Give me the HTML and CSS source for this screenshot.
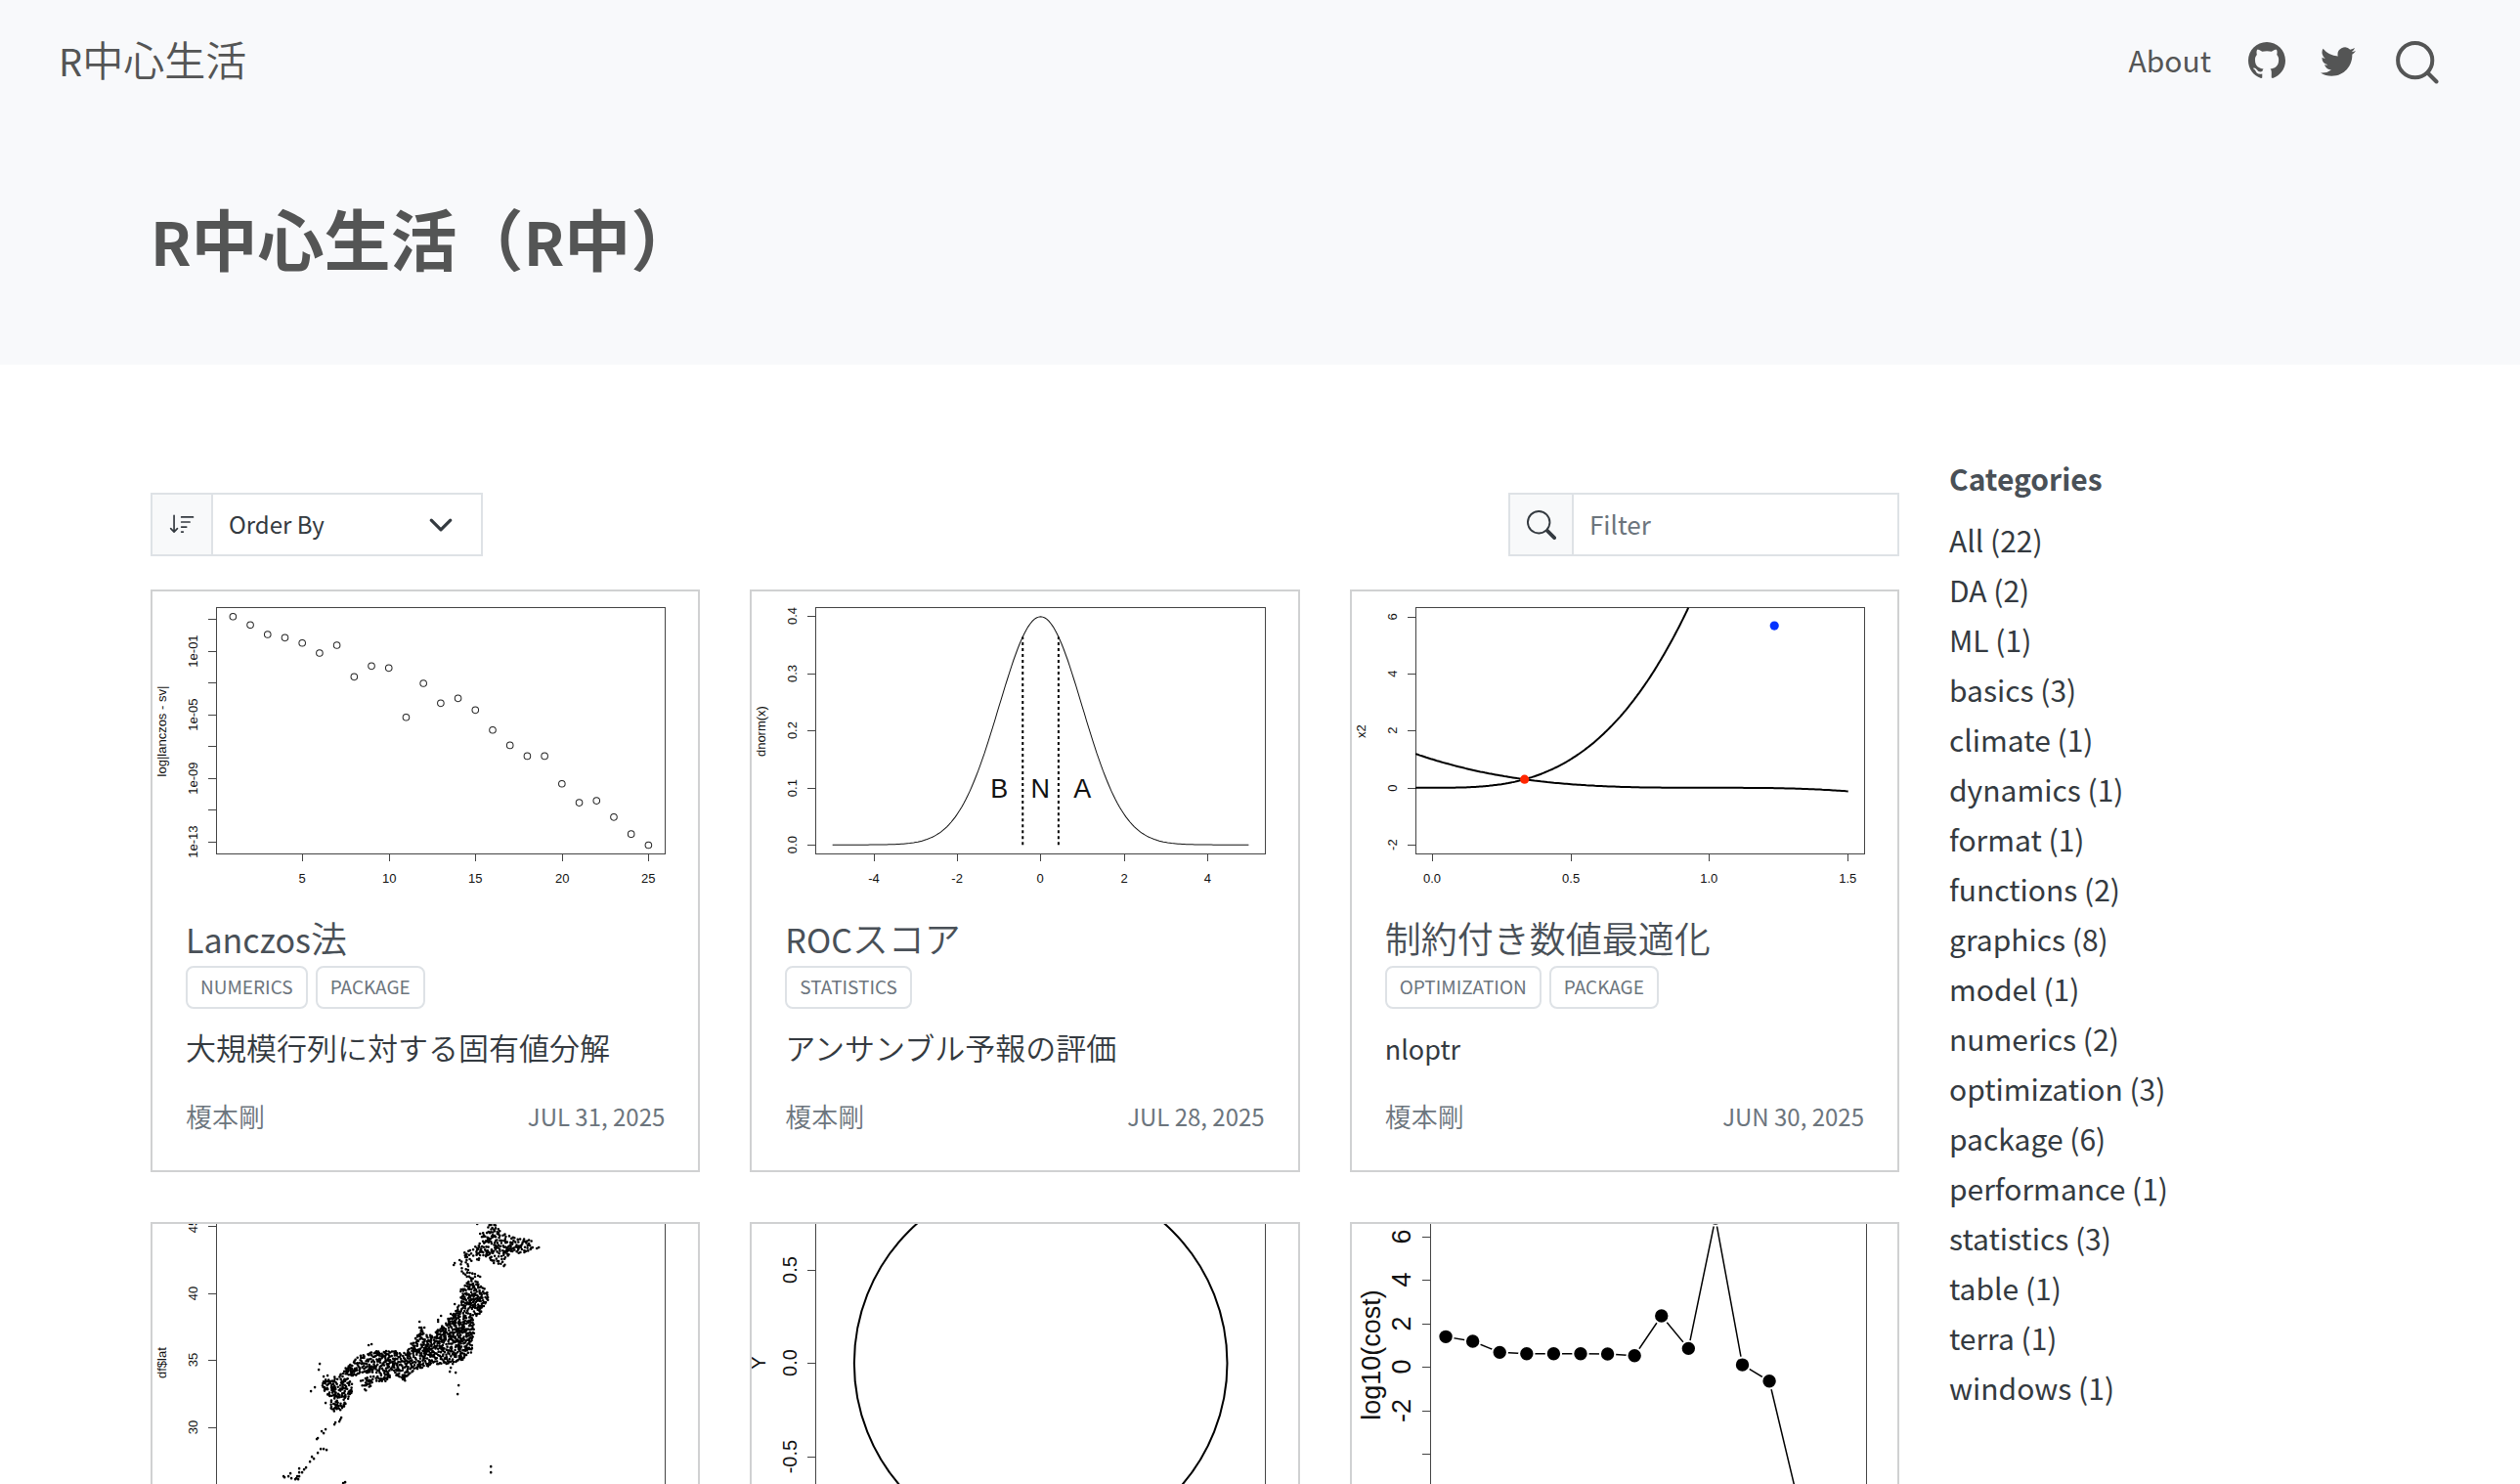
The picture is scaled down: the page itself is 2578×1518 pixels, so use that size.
FILE: index.html
```html
<!DOCTYPE html>
<html lang="ja">
<head>
<meta charset="utf-8">
<meta name="viewport" content="width=device-width, initial-scale=1">
<title>R中心生活</title>
<link rel="stylesheet" href="styles.css">
</head>
<body>
<header class="banner">
  <nav class="navbar">
    <a class="brand" href="#"><span class="latin">R</span>中心生活</a>
    <div class="nav-links">
      <a class="nav-about" href="#">About</a>
      <a class="nav-icon" href="#" aria-label="GitHub"><svg class="icon-github" viewBox="0 0 16 16" fill="currentColor"><path d="M8 0C3.58 0 0 3.58 0 8c0 3.54 2.29 6.53 5.47 7.59.4.07.55-.17.55-.38 0-.19-.01-.82-.01-1.49-2.01.37-2.53-.49-2.69-.94-.09-.23-.48-.94-.82-1.13-.28-.15-.68-.52-.01-.53.63-.01 1.08.58 1.23.82.72 1.21 1.87.87 2.33.66.07-.52.28-.87.51-1.07-1.78-.2-3.64-.89-3.64-3.95 0-.87.31-1.59.82-2.15-.08-.2-.36-1.02.08-2.12 0 0 .67-.21 2.2.82.64-.18 1.32-.27 2-.27.68 0 1.36.09 2 .27 1.53-1.04 2.2-.82 2.2-.82.44 1.1.16 1.92.08 2.12.51.56.82 1.27.82 2.15 0 3.07-1.87 3.75-3.65 3.95.29.25.54.73.54 1.48 0 1.07-.01 1.93-.01 2.2 0 .21.15.46.55.38A8.012 8.012 0 0 0 16 8c0-4.42-3.58-8-8-8z"/></svg></a>
      <a class="nav-icon" href="#" aria-label="Twitter"><svg class="icon-twitter" viewBox="0 0 16 16" fill="currentColor"><path d="M5.026 15c6.038 0 9.341-5.003 9.341-9.334 0-.14 0-.282-.006-.422A6.685 6.685 0 0 0 16 3.542a6.658 6.658 0 0 1-1.889.518 3.301 3.301 0 0 0 1.447-1.817 6.533 6.533 0 0 1-2.087.793A3.286 3.286 0 0 0 7.875 6.03a9.325 9.325 0 0 1-6.767-3.429 3.289 3.289 0 0 0 1.018 4.382A3.323 3.323 0 0 1 .64 6.575v.045a3.288 3.288 0 0 0 2.632 3.218 3.203 3.203 0 0 1-.865.115 3.23 3.23 0 0 1-.614-.057 3.283 3.283 0 0 0 3.067 2.277A6.588 6.588 0 0 1 .78 13.58a6.32 6.32 0 0 1-.78-.045A9.344 9.344 0 0 0 5.026 15z"/></svg></a>
      <button class="search-button" type="button" aria-label="Search"><svg viewBox="0 0 44 44" fill="none" stroke="currentColor" stroke-width="4"><circle cx="19.700" cy="19.700" r="17.600"/><path d="M32.500 32.500l9 9" stroke-linecap="round"/></svg></button>
    </div>
  </nav>
  <h1 class="page-title"><span class="latin">R</span>中心生活（<span class="latin">R</span>中）</h1>
</header>

<div class="page">
  <main class="listing">
    <div class="toolbar">
      <div class="input-group sort-group">
        <label class="addon" for="order" aria-label="Order By"><svg class="icon-sort" viewBox="0 0 16 16" fill="currentColor"><path d="M3.5 2.500a.5.5 0 0 0-1 0v8.793l-1.146-1.147a.5.5 0 0 0-.708.708l2 1.999.007.007a.497.497 0 0 0 .7-.006l2-2a.5.5 0 0 0-.707-.708L3.5 11.293V2.500zm3.500 1a.5.5 0 0 1 .5-.5h7a.5.5 0 0 1 0 1h-7a.5.5 0 0 1-.5-.5zM7.500 6a.5.5 0 0 0 0 1h5a.5.5 0 0 0 0-1h-5zm0 3a.5.5 0 0 0 0 1h3a.5.5 0 0 0 0-1h-3zm0 3a.5.5 0 0 0 0 1h1a.5.5 0 0 0 0-1h-1z"/></svg></label>
        <select id="order" class="order-select"><option>Order By</option><option>Title</option><option>Date</option></select>
      </div>
      <div class="input-group filter-group">
        <label class="addon" for="filter" aria-label="Filter"><svg class="icon-filter" viewBox="0 0 16 16" fill="currentColor"><path d="M11.742 10.344a6.500 6.500 0 1 0-1.397 1.398h-.001c.03.04.062.078.098.115l3.850 3.850a1 1 0 0 0 1.415-1.414l-3.850-3.850a1.007 1.007 0 0 0-.115-.1zM12 6.500a5.500 5.500 0 1 1-11 0 5.500 5.500 0 0 1 11 0z"/></svg></label>
        <input id="filter" class="filter-input" type="text" placeholder="Filter">
      </div>
    </div>

    <div class="cards">
      <article class="card">
        <svg class="plot" viewBox="0 0 558 306" role="img" aria-label="lanczos" data-plot="lanczos">
          <rect class="frame" x="65" y="16" width="459" height="252"/>
          <path class="tick" d="M57 28h8M57 61h8M57 93h8M57 126h8M57 158h8M57 191h8M57 223h8M57 256h8M153 268v8M242 268v8M330 268v8M419 268v8M507 268v8"/>
          <g class="x-labels"><text x="153" y="298">5</text><text x="242" y="298">10</text><text x="330" y="298">15</text><text x="419" y="298">20</text><text x="507" y="298">25</text></g>
          <g class="y-labels"><text transform="translate(46 61) rotate(-90)">1e-01</text><text transform="translate(46 126) rotate(-90)">1e-05</text><text transform="translate(46 191) rotate(-90)">1e-09</text><text transform="translate(46 256) rotate(-90)">1e-13</text><text transform="translate(14 143) rotate(-90)">log|lanczos - sv|</text></g>
        </svg>
        <div class="card-body">
          <h2 class="card-title"><a href="#"><span class="latin">Lanczos</span>法</a></h2>
          <div class="tags"><a class="tag" href="#">NUMERICS</a><a class="tag" href="#">PACKAGE</a></div>
          <p class="summary">大規模行列に対する固有値分解</p>
          <div class="meta"><span class="author">榎本剛</span><time datetime="2025-07-31">JUL 31, 2025</time></div>
        </div>
      </article>

      <article class="card">
        <svg class="plot" viewBox="0 0 558 306" role="img" aria-label="dnorm" data-plot="dnorm">
          <rect class="frame" x="65" y="16" width="460" height="252"/>
          <path class="tick" d="M57 25h8M57 84h8M57 142h8M57 201h8M57 259h8M125 268v8M210 268v8M295 268v8M381 268v8M466 268v8"/>
          <g class="x-labels"><text x="125" y="298">-4</text><text x="210" y="298">-2</text><text x="295" y="298">0</text><text x="381" y="298">2</text><text x="466" y="298">4</text></g>
          <g class="y-labels"><text transform="translate(46 25) rotate(-90)">0.4</text><text transform="translate(46 84) rotate(-90)">0.3</text><text transform="translate(46 142) rotate(-90)">0.2</text><text transform="translate(46 201) rotate(-90)">0.1</text><text transform="translate(46 259) rotate(-90)">0.0</text><text transform="translate(14 143) rotate(-90)">dnorm(x)</text></g>
          <g class="large-labels"><text x="253" y="211">B</text><text x="295" y="211">N</text><text x="338" y="211">A</text></g>
        </svg>
        <div class="card-body">
          <h2 class="card-title"><a href="#"><span class="latin">ROC</span>スコア</a></h2>
          <div class="tags"><a class="tag" href="#">STATISTICS</a></div>
          <p class="summary">アンサンブル予報の評価</p>
          <div class="meta"><span class="author">榎本剛</span><time datetime="2025-07-28">JUL 28, 2025</time></div>
        </div>
      </article>

      <article class="card">
        <svg class="plot" viewBox="0 0 558 306" role="img" aria-label="nloptr" data-plot="nloptr">
          <rect class="frame" x="65" y="16" width="459" height="252"/>
          <path class="tick" d="M57 26h8M57 84h8M57 142h8M57 201h8M57 259h8M82 268v8M224 268v8M365 268v8M507 268v8"/>
          <g class="x-labels"><text x="82" y="298">0.0</text><text x="224" y="298">0.5</text><text x="365" y="298">1.0</text><text x="507" y="298">1.5</text></g>
          <g class="y-labels"><text transform="translate(46 26) rotate(-90)">6</text><text transform="translate(46 84) rotate(-90)">4</text><text transform="translate(46 142) rotate(-90)">2</text><text transform="translate(46 201) rotate(-90)">0</text><text transform="translate(46 259) rotate(-90)">-2</text><text transform="translate(14 143) rotate(-90)">x2</text></g>
        </svg>
        <div class="card-body">
          <h2 class="card-title"><a href="#">制約付き数値最適化</a></h2>
          <div class="tags"><a class="tag" href="#">OPTIMIZATION</a><a class="tag" href="#">PACKAGE</a></div>
          <p class="summary"><span class="latin">nloptr</span></p>
          <div class="meta"><span class="author">榎本剛</span><time datetime="2025-06-30">JUN 30, 2025</time></div>
        </div>
      </article>

      <article class="card">
        <svg class="plot" viewBox="0 0 558 306" role="img" aria-label="stations" data-plot="stations">
          <path class="frame" d="M65 0v306M524 0v306"/>
          <path class="tick" d="M57 2h8M57 71h8M57 139h8M57 208h8M57 276h8"/>
          <g class="y-labels"><text transform="translate(46 2) rotate(-90)">45</text><text transform="translate(46 71) rotate(-90)">40</text><text transform="translate(46 139) rotate(-90)">35</text><text transform="translate(46 208) rotate(-90)">30</text><text transform="translate(14 142) rotate(-90)">df$lat</text></g>
        </svg>
      </article>

      <article class="card">
        <svg class="plot" viewBox="0 0 558 306" role="img" aria-label="circle">
          <path class="frame" d="M65 0v306M525 0v306"/>
          <path class="tick" d="M57 47h8M57 142h8M57 238h8"/>
          <g class="y-labels medium-labels"><text transform="translate(46 47) rotate(-90)">0.5</text><text transform="translate(46 142) rotate(-90)">0.0</text><text transform="translate(46 238) rotate(-90)">-0.5</text><text transform="translate(14 142) rotate(-90)">Y</text></g>
          <circle class="curve" cx="295.500" cy="142.300" r="190.700"/>
        </svg>
      </article>

      <article class="card">
        <svg class="plot" viewBox="0 0 558 306" role="img" aria-label="cost" data-plot="cost">
          <path class="frame" d="M80 0v306M526 0v306"/>
          <path class="tick" d="M72 13h8M72 57h8M72 102h8M72 146h8M72 191h8M72 235h8"/>
          <g class="y-labels large-labels"><text transform="translate(60 13) rotate(-90)">6</text><text transform="translate(60 57) rotate(-90)">4</text><text transform="translate(60 102) rotate(-90)">2</text><text transform="translate(60 146) rotate(-90)">0</text><text transform="translate(60 191) rotate(-90)">-2</text><text transform="translate(29 134) rotate(-90)">log10(cost)</text></g>
        </svg>
      </article>
    </div>
  </main>

  <aside class="categories">
    <h2 class="categories-title">Categories</h2>
    <ul class="category-list">
      <li><a href="#">All (22)</a></li>
      <li><a href="#">DA (2)</a></li>
      <li><a href="#">ML (1)</a></li>
      <li><a href="#">basics (3)</a></li>
      <li><a href="#">climate (1)</a></li>
      <li><a href="#">dynamics (1)</a></li>
      <li><a href="#">format (1)</a></li>
      <li><a href="#">functions (2)</a></li>
      <li><a href="#">graphics (8)</a></li>
      <li><a href="#">model (1)</a></li>
      <li><a href="#">numerics (2)</a></li>
      <li><a href="#">optimization (3)</a></li>
      <li><a href="#">package (6)</a></li>
      <li><a href="#">performance (1)</a></li>
      <li><a href="#">statistics (3)</a></li>
      <li><a href="#">table (1)</a></li>
      <li><a href="#">terra (1)</a></li>
      <li><a href="#">windows (1)</a></li>
    </ul>
  </aside>
</div>
<script src="plots.js"></script>
</body>
</html>
```
FILE: styles.css
```css
* {
  box-sizing: border-box;
}

html {
  overflow: hidden;
}

body {
  margin: 0;
  height: 100vh;
  overflow: hidden;
  background: #fff;
  color: #343a40;
  font-family: "Noto Sans CJK JP", "Noto Sans", sans-serif;
  font-size: 30px;
  line-height: 51px;
}

a {
  color: inherit;
  text-decoration: none;
}

svg {
  display: block;
}

h1, h2, p, ul {
  margin: 0;
  padding: 0;
}

.latin {
  line-height: 1;
}

/* Banner */
.banner {
  background: #f8f9fb;
  color: #545555;
}

.navbar {
  display: flex;
  align-items: center;
  justify-content: space-between;
  height: 124px;
  padding: 0 83px 0 60px;
}

.brand {
  padding-bottom: 6px;
  font-size: 42px;
  font-weight: 350;
}

.brand .latin {
  font-size: 38px;
  font-weight: 400;
}

.nav-links {
  display: flex;
  align-items: center;
}

.nav-about {
  margin-right: 38px;
  padding-bottom: 2px;
}

.icon-github {
  width: 38px;
  height: 38px;
  margin-right: 36px;
}

.icon-twitter {
  width: 36px;
  height: 36px;
  margin-right: 41px;
}

.search-button {
  width: 44px;
  height: 44px;
  margin-top: 4px;
  padding: 0;
  border: 0;
  background: none;
  color: inherit;
}

.page-title {
  height: 249px;
  padding: 68px 154px 0;
  font-size: 68px;
  font-weight: 700;
  line-height: 102px;
}

.page-title .latin {
  font-size: 61px;
}

/* Page columns */
.page {
  display: grid;
  grid-template-columns: 1fr 430px;
  gap: 51px;
  padding: 0 154px;
}

.listing {
  padding-top: 131px;
}

.toolbar {
  display: flex;
  justify-content: space-between;
  margin-bottom: 34px;
}

.input-group {
  display: flex;
  height: 65px;
  border: 2px solid #dee2e6;
}

.sort-group {
  width: 340px;
}

.filter-group {
  width: 400px;
}

.addon {
  display: flex;
  flex: none;
  align-items: center;
  justify-content: center;
  width: 62px;
  border-right: 2px solid #dee2e6;
  background: #f8f9fa;
}

.filter-group .addon {
  width: 65px;
}

.icon-sort {
  width: 27px;
  height: 27px;
}

.icon-filter {
  width: 30px;
  height: 30px;
}

.order-select,
.filter-input {
  flex: 1;
  min-width: 0;
  padding: 0 16px 2px;
  border: 0;
  border-radius: 0;
  color: inherit;
  font-family: inherit;
}

.order-select {
  appearance: none;
  background: #fff url("data:image/svg+xml,%3Csvg xmlns='http://www.w3.org/2000/svg' viewBox='0 0 16 16'%3E%3Cpath fill='none' stroke='%23343a40' stroke-linecap='round' stroke-linejoin='round' stroke-width='2' d='m2 5 6 6 6-6'/%3E%3C/svg%3E") no-repeat right 28px center / 26px 26px;
  font-size: 24px;
}

.filter-input {
  background: #fff;
  font-size: 26px;
}

.filter-input::placeholder {
  color: #6c757d;
  opacity: 1;
}

/* Cards */
.cards {
  display: grid;
  grid-template-columns: repeat(3, 1fr);
  gap: 51px;
}

.card {
  min-width: 0;
  border: 2px solid #d0d1d2;
}

.card-body {
  padding: 24px 34px 35px;
}

.card-title {
  margin-bottom: 5px;
  color: #495057;
  font-size: 37px;
  font-weight: 350;
  line-height: 48px;
}

.card-title .latin {
  font-size: 34px;
  font-weight: 400;
}

.tags {
  display: flex;
  gap: 8px;
  margin-bottom: 14px;
}

.tag {
  height: 44px;
  padding: 0 13px;
  border: 2px solid #dee2e6;
  border-radius: 8px;
  color: #6c757d;
  font-size: 19px;
  line-height: 38px;
}

.summary {
  margin-bottom: 25px;
  font-size: 31px;
  font-weight: 350;
  line-height: 50px;
}

.summary .latin {
  font-size: 27px;
  font-weight: 400;
}

.meta {
  display: flex;
  justify-content: space-between;
  color: #6c757d;
  font-size: 24px;
  line-height: 41px;
}

.author {
  font-size: 27px;
  font-weight: 350;
}

/* Plots */
.plot {
  width: 100%;
  height: auto;
  overflow: hidden;
  font-family: "Liberation Sans", Arial, sans-serif;
  font-size: 13px;
  line-height: 1;
  text-anchor: middle;
}

.plot text {
  fill: #111;
}

.frame,
.tick {
  fill: none;
  stroke: #444;
  stroke-width: 1;
  shape-rendering: crispEdges;
}

.medium-labels {
  font-size: 20px;
}

.large-labels {
  font-size: 27px;
}

.curve {
  fill: none;
  stroke: #000;
  stroke-width: 2;
}

.thin-curve {
  stroke: #111;
  stroke-width: 1;
}

.cost-line {
  stroke-width: 1.5;
}

.dashed {
  stroke-dasharray: 3 3;
}

.open-point {
  fill: none;
  stroke: #222;
  stroke-width: 1;
}

.station {
  fill: none;
  stroke: #000;
  stroke-linecap: round;
  stroke-width: 2.6;
}

.solid-point {
  fill: #000;
  stroke: #fff;
  stroke-width: 2;
}

.optimum {
  fill: #ff2600;
}

.start {
  fill: #0433ff;
}

/* Categories */
.categories {
  padding-top: 91px;
}

.categories-title {
  margin-bottom: 12px;
  color: #495057;
  font-size: 30px;
  font-weight: 700;
}

.category-list {
  list-style: none;
}
```
FILE: plots.js
```js
const NS = "http://www.w3.org/2000/svg";
const plot = name => document.querySelector(`[data-plot="${name}"]`);

function add(svg, tag, className, attrs) {
  const el = document.createElementNS(NS, tag);
  el.setAttribute("class", className);
  for (const key in attrs) el.setAttribute(key, attrs[key]);
  svg.appendChild(el);
}

function curve(svg, className, f, from, to, sx, sy) {
  const pts = [];
  for (let i = 0; i <= 200; i++) {
    const x = from + (to - from) * i / 200;
    pts.push(sx(x).toFixed(1) + "," + sy(f(x)).toFixed(1));
  }
  add(svg, "path", className, { d: "M" + pts.join("L") });
}

// Singular value errors
const lanczos = [25.7, 34.3, 44, 47.3, 52.7, 63, 55, 87.3, 76.3, 78.3, 128.7, 94, 114.3,
  109.3, 121.3, 141.7, 157.3, 168.3, 168.3, 196.7, 216, 214, 230.7, 248, 259.3];
lanczos.forEach((y, i) =>
  add(plot("lanczos"), "circle", "open-point", { cx: 82.3 + i * 17.7, cy: y, r: 3.3 }));

// Standard normal density with terciles
const dnorm = x => Math.exp(-x * x / 2) / Math.sqrt(2 * Math.PI);
const nx = x => 295.4 + x * 42.55;
const ny = y => 259 - y * 584.5;
curve(plot("dnorm"), "curve thin-curve", dnorm, -5, 5, nx, ny);
[-0.43, 0.43].forEach(x =>
  add(plot("dnorm"), "path", "curve dashed", { d: `M${nx(x)} ${ny(0)}V${ny(dnorm(x))}` }));

// Constraints, start and optimum
const cx = x => 82 + x * 283.6;
const cy = y => 200.7 - y * 29.17;
curve(plot("nloptr"), "curve", x => 8 * x ** 3, -0.06, 0.924, cx, cy);
curve(plot("nloptr"), "curve", x => (1 - x) ** 3, -0.06, 1.5, cx, cy);
add(plot("nloptr"), "circle", "optimum", { cx: cx(1 / 3), cy: cy(8 / 27), r: 4.6 });
add(plot("nloptr"), "circle", "start", { cx: cx(1.234), cy: cy(5.68), r: 4.6 });

// Cost by iteration
const cost = [115.3, 120, 131.3, 132.7, 132.7, 132.7, 133, 134.7, 94, 127.3, -6, 144, 160.7, 276];
const costX = i => 96 + i * 27.57;
add(plot("cost"), "path", "curve cost-line", { d: "M" + cost.map((y, i) => costX(i) + "," + y).join("L") });
cost.forEach((y, i) => add(plot("cost"), "circle", "solid-point", { cx: costX(i), cy: y, r: 7.7 }));

// Stations: scattered over each island, kept a minimum distance apart
const islands = [
  { gap: 1.3, fill: 0.24, shape: [[340,0],[351,0],[357,9],[372,15],[387,15],[388,21],[392,25],[380,30],[371,30],[361,34],[361,44],[350,41],[342,34],[330,39],[322,39],[316,30],[326,26],[334,20],[336,12]] },
  { gap: 2, fill: 0.18, shape: [[314,37],[325,38],[322,46],[330,50],[330,56],[322,57],[316,49]] },
  { gap: 1.2, fill: 0.34, shape: [[315,61],[326,57],[334,60],[342,68],[344,76],[336,91],[328,98],[330,108],[326,121],[328,130],[317,139],[304,144],[298,142],[286,145],[271,148],[261,156],[258,161],[250,158],[246,149],[233,152],[217,152],[204,156],[190,154],[194,150],[214,133],[229,130],[248,130],[260,132],[265,121],[272,111],[275,104],[279,114],[290,110],[300,99],[309,91],[315,78]] },
  { gap: 1.3, fill: 0.3, shape: [[210,160],[223,156],[242,150],[244,156],[236,164],[227,161],[219,171],[214,168]] },
  { gap: 1.2, fill: 0.32, shape: [[172,161],[193,154],[204,161],[205,171],[200,180],[196,188],[188,193],[182,190],[183,178],[175,171]] }
];
const islets = [[332,0],[335,10],[309,40],[308,42],[314,37],[273,100],[273,106],[278,106],[292,98],[295,94],[292,100],[221,124],[224,123],[171,143],[170,149],[162,171],[166,167],[177,183],[175,156],[179,155],[307,143],[305,147],[304,151],[310,152],[313,165],[312,174],[193,198],[192,200],[191,202],[187,203],[186,205],[177,210],[173,212],[175,214],[169,219],[168,220],[175,230],[172,230],[178,231],[169,234],[163,238],[165,240],[161,243],[157,249],[150,250],[155,251],[153,254],[150,254],[141,255],[139,258],[134,258],[135,259],[142,260],[148,258],[149,261],[146,261],[147,260],[150,258],[346,248],[346,254],[197,264],[195,265],[309,82],[305,92],[335,54],[333,53],[395,24],[393,25]];

let seed = 7;
const random = () => (seed = (seed * 16807) % 2147483647) / 2147483647;

function inside(x, y, shape) {
  let hit = false;
  for (let i = 0, j = shape.length - 1; i < shape.length; j = i++) {
    const [xi, yi] = shape[i], [xj, yj] = shape[j];
    if ((yi > y) !== (yj > y) && x < (xj - xi) * (y - yi) / (yj - yi) + xi) hit = !hit;
  }
  return hit;
}

const stations = [...islets];
for (const { gap, fill, shape } of islands) {
  const xs = shape.map(p => p[0]), ys = shape.map(p => p[1]);
  const x0 = Math.min(...xs), x1 = Math.max(...xs), y0 = Math.min(...ys), y1 = Math.max(...ys);
  const placed = [];
  for (let n = 0; n < (x1 - x0) * (y1 - y0) * fill; n++) {
    const x = x0 + random() * (x1 - x0), y = y0 + random() * (y1 - y0);
    if (inside(x, y, shape) && placed.every(p => Math.hypot(p[0] - x, p[1] - y) > gap)) placed.push([x, y]);
  }
  stations.push(...placed);
}
add(plot("stations"), "path", "station", { d: stations.map(([x, y]) => `M${x.toFixed(1)} ${y.toFixed(1)}h0`).join("") });
```
